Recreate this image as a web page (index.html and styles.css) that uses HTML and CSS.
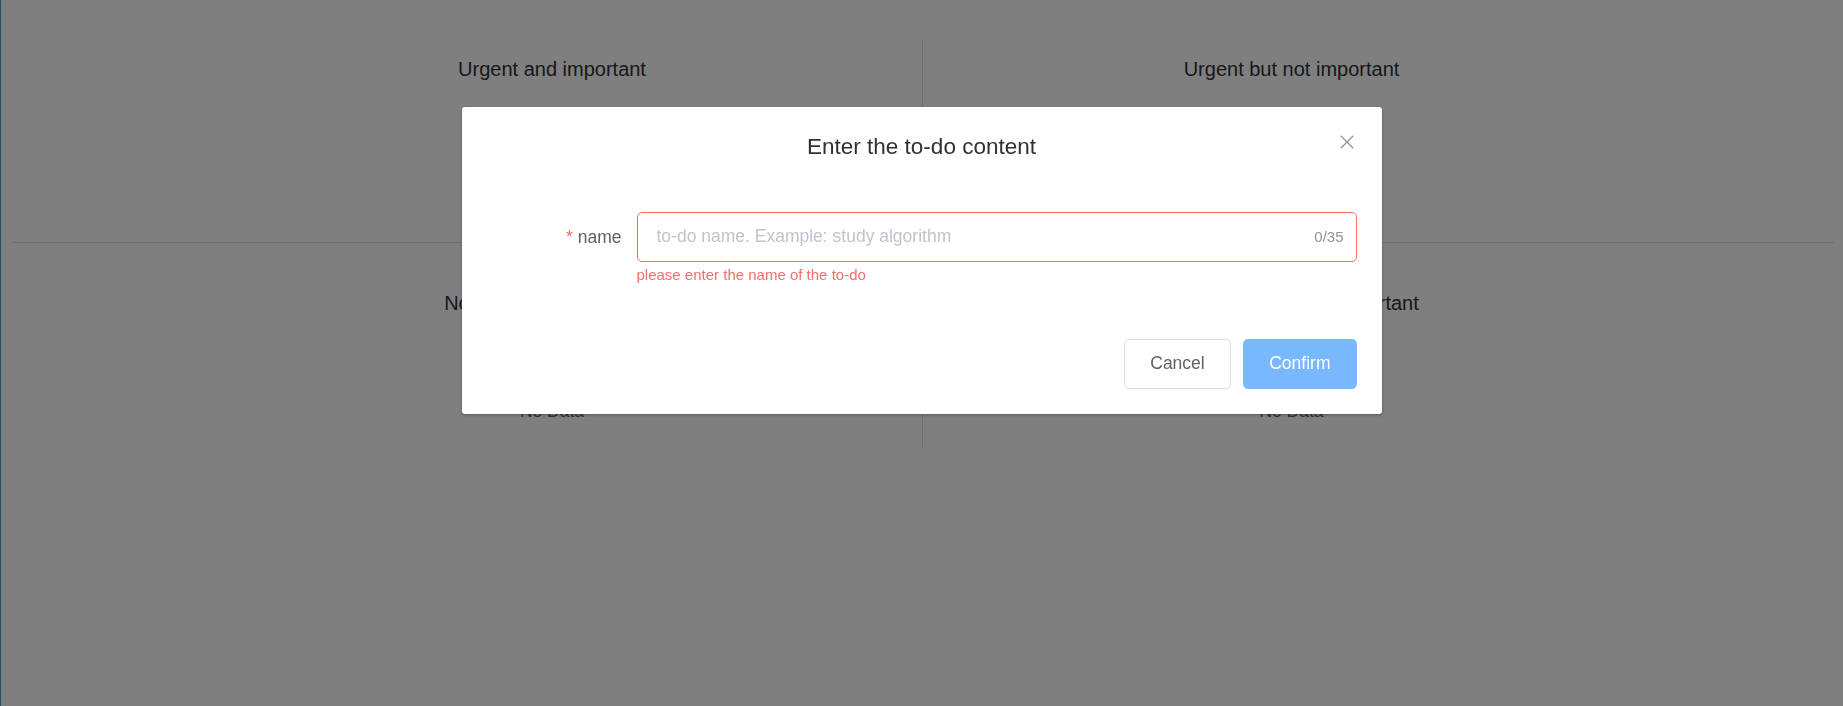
FILE: index.html
```html
<!DOCTYPE html>
<html lang="en">
<head>
<meta charset="utf-8">
<title>Todo matrix</title>
<link rel="stylesheet" href="styles.css">
</head>
<body>
<div class="page">
  <div class="matrix">
    <div class="quad quad-top quad-left">
      <div class="quad-title">Urgent and important</div>
      <div class="empty">No Data</div>
    </div>
    <div class="quad quad-top quad-right">
      <div class="quad-title">Urgent but not important</div>
      <div class="empty">No Data</div>
    </div>
    <div class="quad quad-bottom quad-left">
      <div class="quad-title">Not urgent but important</div>
      <div class="empty">No Data</div>
    </div>
    <div class="quad quad-bottom quad-right">
      <div class="quad-title">Not urgent and not important</div>
      <div class="empty">No Data</div>
    </div>
  </div>
</div>

<div class="overlay">
  <div class="dialog">
    <div class="dialog-header">
      <span class="dialog-title">Enter the to-do content</span>
      <button class="dialog-close" aria-label="Close">
        <svg width="20" height="20" viewBox="0 0 20 20"><path d="M3.8 3.8 L16.2 16.2 M16.2 3.8 L3.8 16.2" stroke="#909399" stroke-width="1.3" fill="none"/></svg>
      </button>
    </div>
    <div class="dialog-body">
      <div class="form-item">
        <label class="form-label"><span class="req">*</span>name</label>
        <div class="form-content">
          <div class="input is-error">
            <input class="input-inner" type="text" placeholder="to-do name. Example: study algorithm">
            <span class="input-count">0/35</span>
          </div>
          <div class="form-error">please enter the name of the to-do</div>
        </div>
      </div>
    </div>
    <div class="dialog-footer">
      <button class="btn btn-default">Cancel</button>
      <button class="btn btn-primary">Confirm</button>
    </div>
  </div>
</div>
</body>
</html>
```

FILE: styles.css
```css
* { box-sizing: border-box; }

html, body {
  margin: 0;
  padding: 0;
}

body {
  min-height: 100vh;
  background: #ffffff;
  border-left: 1px solid #3ca0b4;
  font-family: "Liberation Sans", Arial, Helvetica, sans-serif;
  color: #303133;
}

.page {
  padding: 39px 9px 0 11px;
}

.matrix {
  display: grid;
  grid-template-columns: 1fr 1fr;
}

.quad {
  display: flex;
  flex-direction: column;
  align-items: center;
}

.quad-top {
  height: 204px;
  border-bottom: 1px solid #dcdfe6;
  padding-top: 18px;
}

.quad-bottom {
  height: 205px;
  padding-top: 48px;
}

.quad-left {
  border-right: 1px solid #dcdfe6;
  padding-left: 170px;
}

.quad-right {
  padding-right: 174px;
}

.quad-title {
  font-size: 20px;
  line-height: 24px;
  color: #303133;
}

.empty {
  margin-top: 86px;
  font-size: 17.5px;
  line-height: 20px;
  color: #606266;
}

/* overlay + dialog */
.overlay {
  position: fixed;
  inset: 0;
  background: rgba(0, 0, 0, 0.5);
}

.dialog {
  position: relative;
  width: 920px;
  margin: 107px auto 0;
  background: #ffffff;
  border-radius: 3px;
  box-shadow: 0 1px 3px rgba(0, 0, 0, 0.3);
}

.dialog-header {
  padding: 25px 25px 12.5px;
  text-align: center;
}

.dialog-title {
  font-size: 22.5px;
  line-height: 30px;
  color: #303133;
}

.dialog-close {
  position: absolute;
  top: 25px;
  right: 25px;
  width: 20px;
  height: 20px;
  padding: 0;
  border: 0;
  background: transparent;
  display: flex;
}

.dialog-body {
  padding: 37px 25px 37px;
}

.form-item {
  display: flex;
  margin-bottom: 7.5px;
}

.form-label {
  width: 150px;
  flex: none;
  padding-right: 15px;
  text-align: right;
  font-size: 17.5px;
  line-height: 50px;
  color: #606266;
}

.req {
  color: #f56c6c;
  margin-right: 5px;
}

.form-content {
  flex: 1;
}

.input {
  display: flex;
  align-items: center;
  height: 50px;
  border: 1px solid #dcdfe6;
  border-radius: 5px;
  padding: 0 12px 0 19px;
  background: #ffffff;
}

.input.is-error {
  border-color: #f56c6c;
}

.input-inner {
  flex: 1;
  border: 0;
  outline: none;
  padding: 0;
  font-family: inherit;
  font-size: 17.5px;
  color: #606266;
  background: transparent;
}

.input-inner::placeholder {
  color: #c0c4cc;
}

.input-count {
  font-size: 15px;
  color: #909399;
}

.form-error {
  padding-top: 5px;
  font-size: 15px;
  line-height: 15px;
  color: #f56c6c;
}

.dialog-footer {
  display: flex;
  justify-content: flex-end;
  gap: 12.5px;
  padding: 12.5px 25px 25px;
}

.btn {
  height: 50px;
  padding: 0 25px;
  border-radius: 5px;
  font-family: inherit;
  font-size: 17.5px;
  border: 1px solid #dcdfe6;
  cursor: pointer;
}

.btn-default {
  background: #ffffff;
  color: #606266;
}

.btn-primary {
  background: #79b7fe;
  border-color: #79b7fe;
  color: #ffffff;
}
```
